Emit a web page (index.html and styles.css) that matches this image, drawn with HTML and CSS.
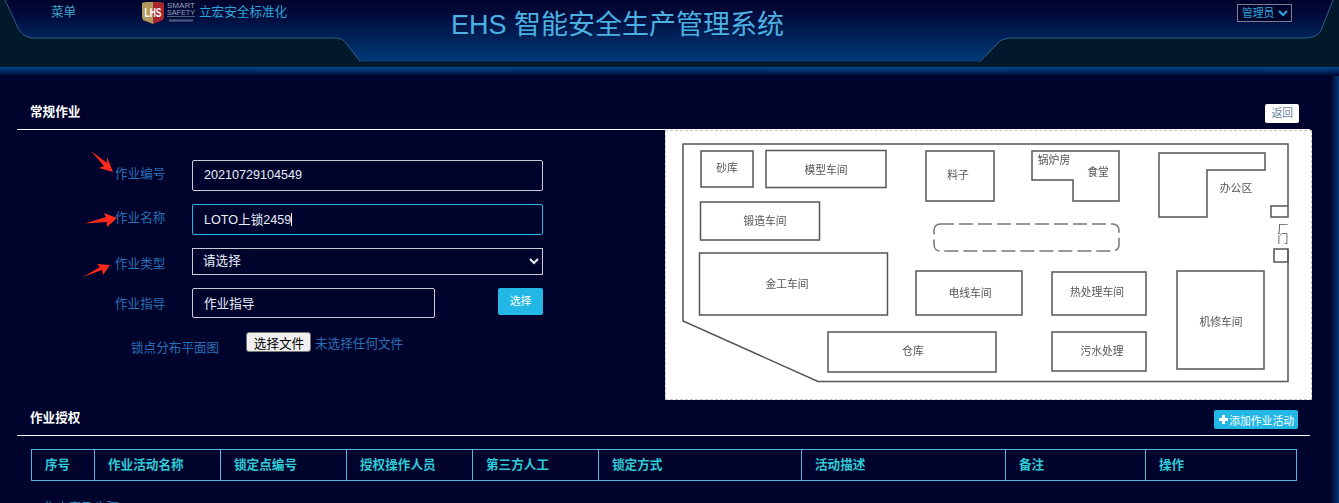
FILE: index.html
```html
<!DOCTYPE html>
<html lang="en">
<head>
    <meta charset="UTF-8">
    <title>EHS 智能安全生产管理系统</title>
    <link rel="stylesheet" href="styles.css">
</head>
<body>

    <div class="header">
        <svg class="header-shape" width="1339" height="67" viewBox="0 0 1339 67">
            <path d="M0 0H5L18 28C22 35 27 38 34 38H334C342 38 345 41 349 47L360 61.500H980L1000 41C1003 39 1008 38 1013 38H1303C1315 38 1320 34 1322 28L1333 0H1339V67H0Z" fill="#02182b"/>
            <path d="M5 0L18 28C22 35 27 38 34 38H334C342 38 345 41 349 47L360 61.500M980 61.500L1000 41C1003 39 1008 38 1013 38H1303C1315 38 1320 34 1322 28L1333 0" fill="none" stroke="#2a5f8c" stroke-width="1"/>
        </svg>
        <div class="topbar">
            <a class="menu-link">菜单</a>
            <div class="brand">
                <svg class="logo" width="54" height="24" viewBox="0 0 54 24">
                    <path d="M0 3L4 2H11V24L1 20L0 17Z" fill="#b39a5e"/>
                    <path d="M11 2H18L22 3V17L21 20L11 24Z" fill="#a8262e"/>
                    <text x="11" y="16.500" class="logo-mark" text-anchor="middle" textLength="17" lengthAdjust="spacingAndGlyphs">LHS</text>
                    <text x="25" y="8" class="logo-word" textLength="28" lengthAdjust="spacingAndGlyphs">SMART</text>
                    <text x="25" y="14.500" class="logo-word" textLength="28" lengthAdjust="spacingAndGlyphs">SAFETY</text>
                    <rect x="25" y="16" width="28" height="1" fill="#555d7c"/>
                    <rect x="27" y="19.500" width="24" height="2" fill="#555d7c"/>
                </svg>
                <span>立宏安全标准化</span>
            </div>
            <select class="user-select"><option>管理员</option></select>
        </div>
        <h1 class="system-title">EHS 智能安全生产管理系统</h1>
    </div>
    <div class="header-band"></div>

    <div class="container">

        <div class="section-head head-first">
            <h2>常规作业</h2>
            <a class="button-back">返回</a>
        </div>

        <div class="work-panel">
            <div class="work-form">
                <div class="form-row">
                    <label class="lift-2">作业编号</label>
                    <input class="field" type="text" value="20210729104549">
                </div>
                <div class="form-row">
                    <label class="lift-2">作业名称</label>
                    <div class="field-wrap">
                        <input class="field field-focus" type="text" value="LOTO上锁2459">
                        <span class="caret"></span>
                    </div>
                </div>
                <div class="form-row">
                    <label class="drop-2">作业类型</label>
                    <select class="field field-select"><option>请选择</option></select>
                </div>
                <div class="form-row row-last">
                    <label class="lift-1">作业指导</label>
                    <input class="field field-short" type="text" value="作业指导">
                    <a class="button-pick">选择</a>
                </div>
                <div class="file-row">
                    <label>锁点分布平面图</label>
                    <button class="file-button" type="button">选择文件</button>
                    <span>未选择任何文件</span>
                </div>

                <!-- red note arrows drawn on top of the screenshot -->
                <svg class="note-arrows" width="130" height="150" viewBox="0 0 130 150">
                    <path d="M91 21L107 33L107 27L113 42L99 38L104 36Z"/>
                    <path d="M85 93.500L106 87L104 83L117 88L107 97L107 92Z"/>
                    <path d="M83 147L100 137L97 134L110 135L103 145L102 140Z"/>
                </svg>
            </div>

            <div class="plan-box">
                <svg class="plan" width="645" height="268" viewBox="666 131 645 268">
                    <g class="plan-lines">
                        <path d="M1288 206V144H683V321L818 381.500H1288V249"/>
                        <rect x="1271" y="206" width="17" height="11"/>
                        <rect x="1274" y="249" width="14" height="13"/>
                        <rect x="701" y="151" width="52" height="36"/>
                        <rect x="766" y="150.500" width="120" height="37"/>
                        <rect x="926" y="151" width="68" height="50"/>
                        <path d="M1032 151H1119V201H1073V180H1032Z"/>
                        <path d="M1159 153H1265V170H1207V217H1159Z"/>
                        <rect x="700.500" y="202" width="119" height="38"/>
                        <rect x="699.500" y="253" width="188" height="62"/>
                        <rect x="916" y="271" width="106" height="44"/>
                        <rect x="1052" y="272" width="94" height="43"/>
                        <rect x="1177" y="271" width="87" height="98"/>
                        <rect x="828" y="332" width="168" height="40"/>
                        <rect x="1052" y="332" width="94" height="39"/>
                        <rect class="plan-road" x="934" y="224" width="185" height="27" rx="6"/>
                    </g>
                    <g class="plan-labels">
                        <text x="727" y="172">砂库</text>
                        <text x="826" y="174">模型车间</text>
                        <text x="958" y="179">料子</text>
                        <text x="1054" y="164">锅炉房</text>
                        <text x="1098" y="176">食堂</text>
                        <text x="1236" y="192">办公区</text>
                        <text x="765" y="225">锻造车间</text>
                        <text x="787" y="288">金工车间</text>
                        <text x="970" y="297">电线车间</text>
                        <text x="1097" y="296">热处理车间</text>
                        <text x="1221" y="326">机修车间</text>
                        <text x="913" y="355">仓库</text>
                        <text x="1102" y="355">污水处理</text>
                        <text x="1283" y="233">厂</text>
                        <text x="1283" y="243">门</text>
                    </g>
                </svg>
            </div>
        </div>

        <div class="section-head head-second">
            <h2>作业授权</h2>
            <a class="button-add"><span class="plus"></span>添加作业活动</a>
        </div>

        <table class="auth-table">
            <thead>
                <tr>
                    <th class="col-no">序号</th>
                    <th class="col-md">作业活动名称</th>
                    <th class="col-md">锁定点编号</th>
                    <th class="col-md">授权操作人员</th>
                    <th class="col-md">第三方人工</th>
                    <th class="col-lock">锁定方式</th>
                    <th class="col-desc">活动描述</th>
                    <th class="col-sm">备注</th>
                    <th>操作</th>
                </tr>
            </thead>
        </table>

        <p class="cut-text">工作内容及步骤</p>

    </div>
</body>
</html>
```

FILE: styles.css
```css
html, body {
    height: 503px;
    overflow: hidden;
}
body {
    margin: 0;
    padding: 0;
    font-family: "Liberation Sans", Arial, "Noto Sans CJK SC", sans-serif;
    font-size: 12.6px;
    background-color: #00042c;
    box-sizing: border-box;
}
.header {
    position: relative;
    height: 67px;
    background: linear-gradient(#00042c 0, #000a3a 14px, #003b78 62px);
}
.header-shape {
    position: absolute;
    left: 0;
    top: 0;
}
.header-band {
    height: 9px;
    background: linear-gradient(#004a94, #00042c);
}
.topbar {
    position: relative;
    display: flex;
    align-items: center;
    height: 21px;
    padding: 0 47px 0 51px;
    color: #2ea7d8;
}
.menu-link {
    width: 91px;
    color: #3ea3c9;
}
.brand {
    display: flex;
    align-items: center;
    gap: 3px;
    flex: 1;
}
.logo {
    display: block;
    margin-top: 3px;
}
.logo-mark {
    font-size: 12px;
    font-weight: bold;
    fill: #ffffff;
}
.logo-word {
    font-size: 6.400px;
    fill: #9ba1b5;
}
.user-select {
    align-self: flex-start;
    width: 55px;
    height: 18px;
    margin-top: 4px;
    padding: 0;
    font: inherit;
    font-size: 10.8px;
    color: #2ea7d8;
    background-color: #00042c;
    border: 1px solid #7c7f8f;
    color-scheme: dark;
}
.system-title {
    position: relative;
    margin: -9px 0 0;
    padding: 0 0 0 451px;
    font-size: 27px;
    font-weight: normal;
    line-height: 27px;
    color: #4cb1e2;
}
.container {
    position: relative;
    height: 427px;
    padding: 0 29px 0 17px;
    background: linear-gradient(to left, #003a78, #00042c 8px);
    box-sizing: border-box;
}
.section-head {
    display: flex;
    justify-content: space-between;
    align-items: flex-start;
    border-bottom: 1px solid #ffffff;
    padding: 0 11px 0 13px;
    box-sizing: border-box;
}
.head-first {
    height: 54px;
    padding-top: 28px;
}
.head-second {
    height: 36px;
    padding-top: 10px;
}
.section-head h2 {
    margin: -1px 0 0;
    font-size: 12.6px;
    line-height: 18px;
    color: #ffffff;
}
.button-back {
    padding: 0 6px;
    font-size: 10.8px;
    line-height: 19px;
    color: #6b7f9f;
    background-color: #ffffff;
    border-radius: 2px;
}
.button-add {
    display: flex;
    align-items: center;
    gap: 1px;
    height: 19px;
    margin-right: 1px;
    padding: 0 4px 0 5px;
    font-size: 10.8px;
    color: #ffffff;
    background-color: #23b7e5;
    border-radius: 2px;
}
.plus {
    position: relative;
    width: 9px;
    height: 3px;
    background-color: #ffffff;
}
.plus::after {
    content: "";
    position: absolute;
    left: 3px;
    top: -3px;
    width: 3px;
    height: 9px;
    background-color: #ffffff;
}
.work-panel {
    display: flex;
    height: 270px;
}
.work-form {
    position: relative;
    flex: none;
    width: 648px;
    padding-top: 30px;
    box-sizing: border-box;
}
.form-row {
    display: flex;
    align-items: center;
    margin-bottom: 13px;
    padding-left: 98px;
}
.row-last {
    margin-bottom: 0;
}
.form-row label {
    width: 77px;
    color: #2a6fb5;
}
.lift-2 {
    margin-top: -7px;
}
.lift-1 {
    margin-top: -2px;
}
.drop-2 {
    margin-top: 2px;
}
.field {
    display: block;
    width: 351px;
    height: 31px;
    padding: 0 11px 2px;
    font: inherit;
    color: #e8eefa;
    background-color: transparent;
    border: 1px solid #c9ccd4;
    border-radius: 2px;
    box-sizing: border-box;
    outline: none;
}
.field-wrap {
    position: relative;
}
.field-focus {
    border-color: #23b7e5;
}
.caret {
    position: absolute;
    left: 99px;
    top: 9px;
    width: 1px;
    height: 13px;
    background-color: #ffffff;
}
.field-select {
    height: 27px;
    padding: 0 6px 2px;
    color-scheme: dark;
    background-color: #00042c;
    border-radius: 0;
}
.field-short {
    width: 243px;
    height: 30px;
}
.button-pick {
    width: 45px;
    margin-left: 63px;
    margin-top: -3px;
    font-size: 10.8px;
    line-height: 27px;
    text-align: center;
    color: #ffffff;
    background-color: #23b7e5;
    border-radius: 2px;
}
.file-row {
    display: flex;
    align-items: center;
    height: 20px;
    margin-top: 14px;
    padding-left: 114px;
    color: #2a6fb5;
}
.file-row label {
    width: 115px;
    margin-top: 8px;
}
.file-button {
    width: 65px;
    height: 20px;
    margin-right: 4px;
    padding: 0 0 0 1px;
    font: inherit;
    font-size: 12.6px;
    color: #000000;
    background-color: #efefef;
    border: 1px solid #767676;
    border-radius: 3px;
}
.note-arrows {
    position: absolute;
    left: -17px;
    top: 0;
    fill: #ff2a1c;
}
.plan-box {
    flex: none;
    width: 647px;
    height: 270px;
    background-color: #ffffff;
    border: 1px dashed #c4c4c4;
    box-sizing: border-box;
}
.plan {
    display: block;
}
.plan-lines {
    fill: none;
    stroke: #555555;
    stroke-width: 1.500;
    filter: blur(0.4px);
}
.plan-road {
    stroke: #777777;
    stroke-dasharray: 14 5;
}
.plan-labels {
    font-size: 10.8px;
    text-anchor: middle;
    fill: #555555;
    filter: blur(0.4px);
}
.auth-table {
    width: 1266px;
    margin: 13px 0 0 14px;
    border-collapse: collapse;
    table-layout: fixed;
}
.auth-table th {
    height: 31px;
    padding: 0 13px 4px;
    font-size: 12.6px;
    text-align: left;
    color: #2ecbd6;
    border: 1px solid #56b4e0;
    box-sizing: border-box;
}
.col-no {
    width: 63px;
}
.col-md {
    width: 126px;
}
.col-lock {
    width: 203px;
}
.col-desc {
    width: 204px;
}
.col-sm {
    width: 140px;
}
.cut-text {
    margin: 18px 0 0 14px;
    line-height: 18px;
    color: #2a8fc0;
}
```
